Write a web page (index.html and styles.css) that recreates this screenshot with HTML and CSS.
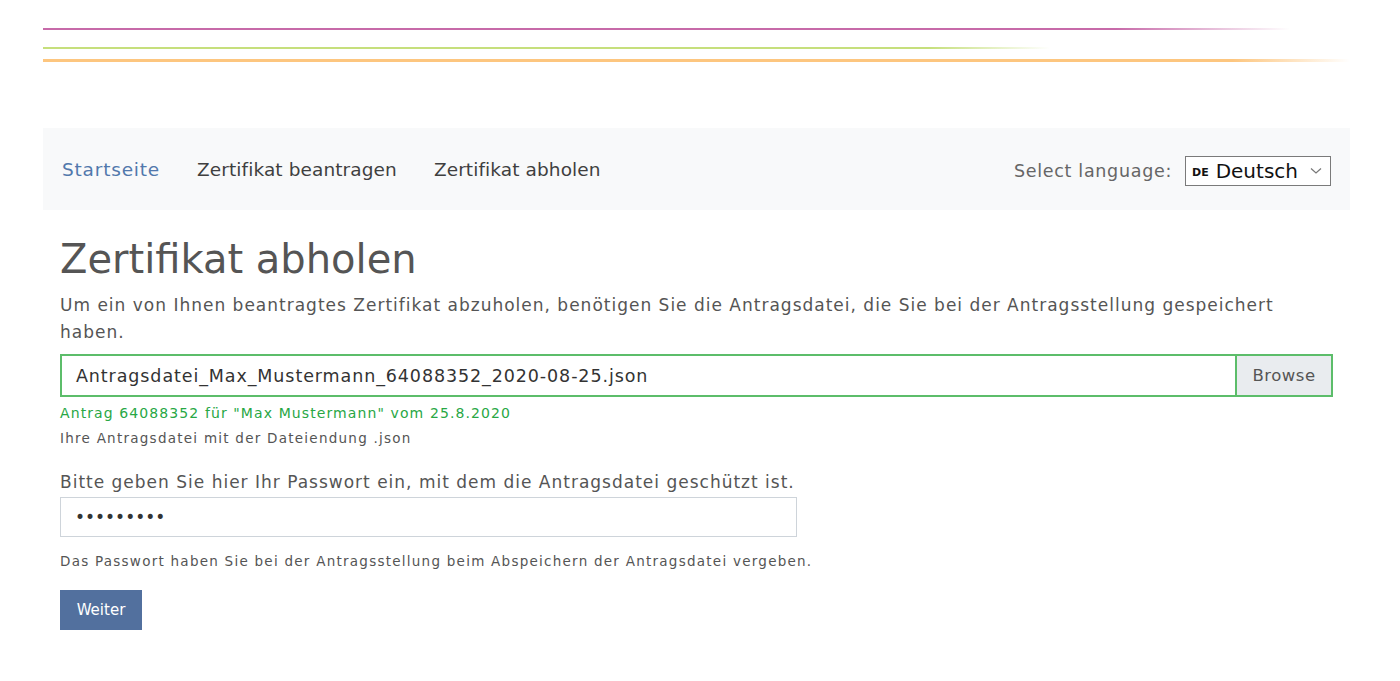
FILE: index.html
```html
<!DOCTYPE html>
<html lang="de">
<head>
    <meta charset="UTF-8">
    <meta name="viewport" content="width=device-width, initial-scale=1.0">
    <title>Zertifikat abholen</title>
    <link rel="stylesheet" href="styles.css">
</head>
<body>
    <div class="container">
        <div class="header-lines">
            <div class="line line-pink"></div>
            <div class="line line-green"></div>
            <div class="line line-orange"></div>
        </div>
        <nav class="navbar">
            <div class="nav-links">
                <a href="#" class="nav-link active">Startseite</a>
                <a href="#" class="nav-link">Zertifikat beantragen</a>
                <a href="#" class="nav-link">Zertifikat abholen</a>
            </div>
            <div class="language-container">
                <span class="language-label">Select language:</span>
                <div class="language-select">
                    <span class="flag">DE</span>
                    <span class="language-name">Deutsch</span>
                    <svg class="chevron" width="12" height="8" viewBox="0 0 12 8">
                        <path d="M1 1.5 L6 6 L11 1.5" fill="none" stroke="#777" stroke-width="1.2"/>
                    </svg>
                </div>
            </div>
        </nav>
        <div class="content">
            <h1>Zertifikat abholen</h1>
            <p class="intro">Um ein von Ihnen beantragtes Zertifikat abzuholen, benötigen Sie die Antragsdatei, die Sie bei der Antragsstellung gespeichert haben.</p>
            <div class="file-input valid">
                <div class="file-name">Antragsdatei_Max_Mustermann_64088352_2020-08-25.json</div>
                <div class="browse-button">Browse</div>
            </div>
            <div class="valid-feedback">Antrag 64088352 für "Max Mustermann" vom 25.8.2020</div>
            <div class="form-text">Ihre Antragsdatei mit der Dateiendung .json</div>

            <label class="form-label" for="password">Bitte geben Sie hier Ihr Passwort ein, mit dem die Antragsdatei geschützt ist.</label>
            <input type="password" id="password" class="password-input" value="geheim123">
            <div class="form-text help">Das Passwort haben Sie bei der Antragsstellung beim Abspeichern der Antragsdatei vergeben.</div>

            <button class="submit-button">Weiter</button>
        </div>
    </div>
</body>
</html>
```

FILE: styles.css
```css
body {
    margin: 0;
    font-family: "DejaVu Sans", Verdana, sans-serif;
    color: #555;
    background-color: #fff;
}
.container {
    width: 1307px;
    margin-left: 43px;
}
.header-lines {
    height: 128px;
    padding-top: 28px;
    box-sizing: border-box;
}
.line {
    height: 2px;
}
.line-pink {
    width: 1247px;
    background: linear-gradient(to right, #c76aa9 0%, #c76aa9 86%, rgba(199, 106, 169, 0) 100%);
}
.line-green {
    width: 1007px;
    margin-top: 17px;
    background: linear-gradient(to right, #c6df7c 0%, #c6df7c 88%, rgba(198, 223, 124, 0) 100%);
}
.line-orange {
    width: 1307px;
    height: 3px;
    margin-top: 10px;
    background: linear-gradient(to right, #fdc67f 0%, #fdc67f 91%, rgba(253, 198, 127, 0) 100%);
}
.navbar {
    height: 82px;
    background-color: #f8f9fa;
    display: flex;
    justify-content: space-between;
    align-items: center;
    padding: 0 19px;
}
.nav-links {
    display: flex;
    gap: 37px;
}
.nav-link {
    font-size: 18.5px;
    color: #3f3f3f;
    text-decoration: none;
    letter-spacing: 0.1px;
}
.nav-link.active {
    color: #5178ac;
    letter-spacing: 0.8px;
}
.language-container {
    display: flex;
    align-items: center;
    gap: 13px;
    padding-top: 3px;
}
.language-label {
    font-size: 17.5px;
    letter-spacing: 0.7px;
    color: #666;
}
.language-select {
    display: flex;
    align-items: center;
    width: 146px;
    height: 30px;
    box-sizing: border-box;
    border: 1px solid #7a7a7a;
    background-color: #fff;
    padding: 0 8px 0 6px;
}
.flag {
    font-size: 11px;
    font-weight: bold;
    color: #111;
    margin-right: 7px;
    padding-top: 3px;
}
.language-name {
    font-size: 20px;
    color: #111;
    flex: 1;
}
.content {
    padding: 0 17px;
}
h1 {
    font-size: 40px;
    font-weight: normal;
    color: #555;
    margin: 21px 0 0 0;
    line-height: 56px;
}
.intro {
    font-size: 17px;
    letter-spacing: 1px;
    line-height: 27px;
    margin: 5px 0 8px 0;
}
.file-input {
    display: flex;
    height: 43px;
    box-sizing: border-box;
    border: 2px solid #5cb85c;
}
.file-input.valid {
    border-color: #5cbd6a;
}
.file-name {
    flex: 1;
    font-size: 17.5px;
    letter-spacing: 0.9px;
    color: #333;
    padding-left: 14px;
    display: flex;
    align-items: center;
}
.browse-button {
    width: 96px;
    box-sizing: border-box;
    border-left: 2px solid #5cbd6a;
    background-color: #e9ecef;
    font-size: 16.5px;
    letter-spacing: 0.5px;
    color: #555;
    display: flex;
    align-items: center;
    justify-content: center;
}
.valid-feedback {
    font-size: 14px;
    letter-spacing: 1.1px;
    color: #28a745;
    margin-top: 8px;
}
.form-text {
    font-size: 13.5px;
    letter-spacing: 1.25px;
    color: #555;
    margin-top: 9px;
}
.form-label {
    display: block;
    font-size: 17px;
    letter-spacing: 1px;
    margin-top: 26px;
    color: #555;
}
.password-input {
    display: block;
    width: 737px;
    height: 40px;
    box-sizing: border-box;
    border: 1px solid #ced4da;
    margin-top: 5px;
    padding: 0 14px;
    font-size: 17px;
    color: #333;
    font-family: "DejaVu Sans", sans-serif;
}
.form-text.help {
    margin-top: 16px;
}
.submit-button {
    margin-top: 21px;
    width: 82px;
    height: 40px;
    border: none;
    background-color: #52709e;
    color: #fff;
    font-size: 15px;
    font-family: "DejaVu Sans", sans-serif;
}
```
